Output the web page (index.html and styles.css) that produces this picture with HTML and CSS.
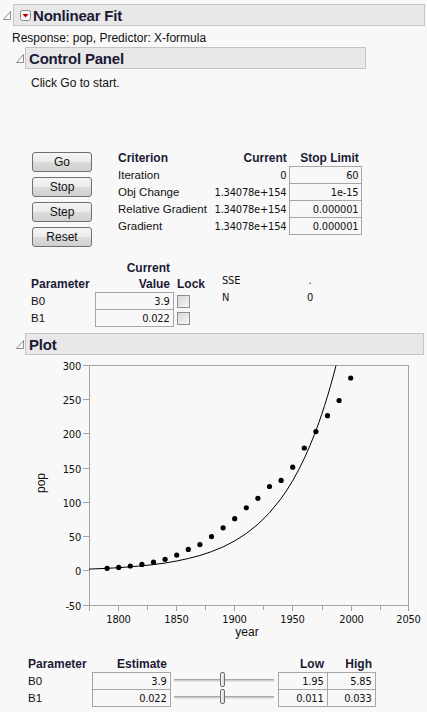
FILE: index.html
```html
<!DOCTYPE html>
<html>
<head>
<meta charset="utf-8">
<title>Nonlinear Fit</title>
<link rel="stylesheet" href="styles.css">
</head>
<body>
<div class="report">
  <div class="ohead lvl0">
    <svg class="disc" width="8" height="9" viewBox="0 0 8 9"><path d="M7.5 0.5 V8.5 H0.5 Z" fill="#fbfbfb" stroke="#8c8c8c"/></svg>
    <div class="obox">
      <svg class="menu" width="11" height="11" viewBox="0 0 11 11"><rect x="0.5" y="0.5" width="10" height="10" rx="2" fill="#f4f4f4" stroke="#8a8a8a"/><path d="M2.5 4 H8.5 L5.5 7.5 Z" fill="#b40000"/></svg>
      <span class="otitle">Nonlinear Fit</span>
    </div>
  </div>
  <div class="subtitle">Response: pop, Predictor: X-formula</div>

  <div class="ohead lvl1 cp">
    <svg class="disc" width="8" height="9" viewBox="0 0 8 9"><path d="M7.5 0.5 V8.5 H0.5 Z" fill="#fbfbfb" stroke="#8c8c8c"/></svg>
    <div class="obox"><span class="otitle">Control Panel</span></div>
  </div>
  <div class="cp-body">
    <div class="msg">Click Go to start.</div>
    <div class="cp-row">
      <div class="btns">
        <button class="btn">Go</button>
        <button class="btn">Stop</button>
        <button class="btn">Step</button>
        <button class="btn">Reset</button>
      </div>
      <table class="crit">
        <tr class="hrow"><th class="c1 l">Criterion</th><th class="c2 r">Current</th><th class="c3 r">Stop Limit</th></tr>
        <tr><td class="l">Iteration</td><td class="r num">0</td><td class="r num box">60</td></tr>
        <tr><td class="l">Obj Change</td><td class="r num">1.34078e+154</td><td class="r num box">1e-15</td></tr>
        <tr><td class="l">Relative Gradient</td><td class="r num">1.34078e+154</td><td class="r num box">0.000001</td></tr>
        <tr><td class="l">Gradient</td><td class="r num">1.34078e+154</td><td class="r num box">0.000001</td></tr>
      </table>
    </div>
    <div class="param-row">
      <table class="params">
        <tr class="hrow"><th class="p1"></th><th class="p2 r">Current</th><th class="p3"></th></tr>
        <tr class="hrow"><th class="l">Parameter</th><th class="r">Value</th><th class="l lock">Lock</th></tr>
        <tr><td class="l">B0</td><td class="r num box">3.9</td><td><span class="chk"></span></td></tr>
        <tr><td class="l">B1</td><td class="r num box">0.022</td><td><span class="chk"></span></td></tr>
      </table>
      <table class="sse">
        <tr><td class="s1 num">SSE</td><td class="s2 num">.</td></tr>
        <tr><td class="s1 num">N</td><td class="s2 num">0</td></tr>
      </table>
    </div>
  </div>

  <div class="ohead lvl1 pl">
    <svg class="disc" width="8" height="9" viewBox="0 0 8 9"><path d="M7.5 0.5 V8.5 H0.5 Z" fill="#fbfbfb" stroke="#8c8c8c"/></svg>
    <div class="obox"><span class="otitle">Plot</span></div>
  </div>

  <svg class="chart" width="427" height="300" viewBox="0 355 427 300">
    <g class="axis" stroke="#a3a3a3" stroke-width="1" fill="none">
      <rect x="89.5" y="365.5" width="319" height="240"/>
      <path d="M83 365.5H89 M83 399.5H89 M83 433.5H89 M83 468.5H89 M83 502.5H89 M83 536.5H89 M83 570.5H89 M83 605.5H89"/>
      <path d="M89.5 605V611 M118.5 605V611 M147.5 605V610 M176.5 605V611 M205.5 605V610 M234.5 605V611 M263.5 605V610 M292.5 605V611 M322.5 605V610 M351.5 605V611 M380.5 605V610 M408.5 605V611"/>
    </g>
    <g class="ylab" text-anchor="end">
      <text x="81" y="369.5">300</text>
      <text x="81" y="403.5">250</text>
      <text x="81" y="437.5">200</text>
      <text x="81" y="472.5">150</text>
      <text x="81" y="506.5">100</text>
      <text x="81" y="540.5">50</text>
      <text x="81" y="574.5">0</text>
      <text x="81" y="609.5">-50</text>
    </g>
    <g class="xlab" text-anchor="middle">
      <text x="118.5" y="622.5">1800</text>
      <text x="176.5" y="622.5">1850</text>
      <text x="234.5" y="622.5">1900</text>
      <text x="292.5" y="622.5">1950</text>
      <text x="351.5" y="622.5">2000</text>
      <text x="408.5" y="622.5">2050</text>
    </g>
    <text class="atitle" x="247" y="636" text-anchor="middle">year</text>
    <text class="atitle" x="45" y="483" text-anchor="middle" transform="rotate(-90 45 483)">pop</text>
    <polyline fill="none" stroke="#000" stroke-width="1" points="89,569.1 107.1,568.3 118.7,567.7 130.3,566.8 141.9,565.8 153.5,564.6 165.1,563.0 176.7,561.0 188.3,558.5 199.9,555.5 211.5,551.6 223.1,546.9 234.7,540.9 246.3,533.5 257.9,524.3 269.5,512.8 281.1,498.5 286.9,490.1 292.7,480.7 298.5,470.1 304.3,458.4 310.1,445.3 315.9,430.7 318.8,422.8 321.7,414.4 324.6,405.5 327.5,396.2 330.4,386.3 333.3,375.9 336.0,365.5"/>
    <g fill="#000">
      <circle cx="107.1" cy="568.3" r="2.6"/>
      <circle cx="118.7" cy="567.4" r="2.6"/>
      <circle cx="130.3" cy="566.0" r="2.6"/>
      <circle cx="141.9" cy="564.4" r="2.6"/>
      <circle cx="153.5" cy="562.2" r="2.6"/>
      <circle cx="165.1" cy="559.3" r="2.6"/>
      <circle cx="176.7" cy="555.1" r="2.6"/>
      <circle cx="188.3" cy="549.4" r="2.6"/>
      <circle cx="199.9" cy="544.6" r="2.6"/>
      <circle cx="211.5" cy="536.6" r="2.6"/>
      <circle cx="223.1" cy="527.8" r="2.6"/>
      <circle cx="234.7" cy="518.7" r="2.6"/>
      <circle cx="246.3" cy="507.8" r="2.6"/>
      <circle cx="257.9" cy="498.3" r="2.6"/>
      <circle cx="269.5" cy="486.5" r="2.6"/>
      <circle cx="281.1" cy="480.4" r="2.6"/>
      <circle cx="292.7" cy="467.2" r="2.6"/>
      <circle cx="304.3" cy="448.0" r="2.6"/>
      <circle cx="315.9" cy="431.6" r="2.6"/>
      <circle cx="327.5" cy="415.7" r="2.6"/>
      <circle cx="339.1" cy="400.5" r="2.6"/>
      <circle cx="350.7" cy="378.0" r="2.6"/>
    </g>
  </svg>

  <table class="est">
    <tr class="hrow"><th class="e1 l">Parameter</th><th class="e2 r">Estimate</th><th class="e3"></th><th class="e4 r">Low</th><th class="e5 r">High</th></tr>
    <tr><td class="l">B0</td><td class="r num box">3.9</td><td><div class="slider"><div class="track"></div><div class="thumb"></div></div></td><td class="r num box">1.95</td><td class="r num box">5.85</td></tr>
    <tr><td class="l">B1</td><td class="r num box">0.022</td><td><div class="slider"><div class="track"></div><div class="thumb"></div></div></td><td class="r num box">0.011</td><td class="r num box">0.033</td></tr>
  </table>
</div>
</body>
</html>
```
FILE: styles.css
```css
html, body {
  margin: 0;
  padding: 0;
  background: #f8f8f8;
}
body {
  width: 427px;
  height: 712px;
  overflow: hidden;
  font-family: "Liberation Sans", Arial, sans-serif;
  font-size: 12px;
  color: #111;
}
.report {
  padding-top: 4px;
}
.ohead {
  display: flex;
  align-items: center;
  height: 22px;
}
.disc {
  display: block;
  flex: none;
}
.lvl0 {
  padding-left: 3px;
}
.lvl0 .disc {
  margin-right: 2px;
}
.lvl1 {
  padding-left: 16px;
  margin-top: 1px;
}
.lvl1 .disc {
  margin-right: 1px;
}
.lvl1.pl {
  margin-top: 6px;
}
.obox {
  box-sizing: border-box;
  height: 22px;
  border: 1px solid #c4c4c4;
  background: #e8e8e8;
  display: flex;
  align-items: center;
  padding-left: 3px;
}
.lvl0 .obox {
  width: 412px;
  padding-left: 6px;
}
.cp .obox {
  width: 341px;
}
.pl .obox {
  width: 399px;
}
.menu {
  display: block;
  margin-right: 2px;
  flex: none;
}
.otitle {
  font-weight: bold;
  font-size: 15px;
  letter-spacing: -0.2px;
  color: #1a1a36;
}
.subtitle {
  padding-left: 12px;
  margin-top: 4px;
  line-height: 16px;
  font-size: 12px;
}
.cp-body {
  padding-left: 31px;
}
.msg {
  margin-top: 6px;
  line-height: 16px;
}
.cp-row {
  display: flex;
  align-items: flex-start;
  margin-top: 59px;
  padding-left: 1px;
}
.btns {
  display: flex;
  flex-direction: column;
  gap: 5px;
  margin-top: 2px;
  width: 60px;
}
.btn {
  box-sizing: border-box;
  width: 60px;
  height: 20px;
  padding: 0;
  border: 1px solid #707070;
  border-radius: 3px;
  background: linear-gradient(#f4f4f4, #ebebeb 50%, #dcdcdc 51%, #d0d0d0);
  font-family: "Liberation Sans", Arial, sans-serif;
  font-size: 12px;
  color: #111;
}
table {
  border-collapse: collapse;
  border-spacing: 0;
}
th, td {
  padding: 0;
  height: 16px;
  line-height: 15px;
  white-space: nowrap;
  font-size: 11.5px;
  vertical-align: middle;
}
th {
  font-weight: bold;
  font-size: 12px;
  color: #1a1a36;
}
.l { text-align: left; }
.r { text-align: right; padding-right: 3px; }
.num {
  font-family: "DejaVu Sans Condensed", "Liberation Serif", serif;
  font-stretch: condensed;
  font-size: 11px;
  letter-spacing: -0.2px;
}
.box {
  border: 1px solid #a6a6a6;
}
.crit {
  margin-left: 26px;
}
.crit .c1 { width: 87px; }
.crit .c2 { width: 80px; }
.crit .c3 { width: 69px; }
.crit td { height: 16px; }
.param-row {
  display: flex;
  align-items: flex-start;
  margin-top: 13px;
}
.params .p1 { width: 64px; }
.params .p2 { width: 75px; }
.params .p3 { width: 32px; }
.params .lock { padding-left: 4px; }
.chk {
  display: block;
  box-sizing: border-box;
  width: 13px;
  height: 13px;
  margin-left: 3px;
  border: 1px solid #8e8e8e;
  background: linear-gradient(135deg, #d8d8d8, #f6f6f6);
}
.sse {
  margin-left: 17px;
  margin-top: 12px;
}
.sse td { height: 17px; }
.sse .s1 { width: 81px; text-align: left; }
.sse .s2 { width: 14px; text-align: center; }
.chart {
  display: block;
  font-family: "Liberation Sans", Arial, sans-serif;
}
.ylab text, .xlab text {
  font-family: "DejaVu Sans Condensed", "Liberation Serif", serif;
  font-stretch: condensed;
  font-size: 11px;
  letter-spacing: -0.2px;
  fill: #111;
}
.atitle {
  font-size: 12px;
  fill: #111;
}
.est {
  margin-left: 28px;
  margin-top: 1px;
}
.est .e1 { width: 64px; }
.est .e2 { width: 75px; }
.est .e3 { width: 108px; }
.est .e4 { width: 46px; }
.est .e5 { width: 45px; }
.slider {
  position: relative;
  height: 16px;
}
.track {
  position: absolute;
  left: 3px;
  top: 6px;
  width: 100px;
  height: 1px;
  border-top: 1px solid #a8a8a8;
  border-bottom: 1px solid #e2e2e2;
  background: #cfcfcf;
}
.thumb {
  position: absolute;
  left: 49px;
  top: -1px;
  box-sizing: border-box;
  width: 5px;
  height: 15px;
  border: 1px solid #6f6f6f;
  border-radius: 2px;
  background: linear-gradient(90deg, #f8f8f8, #d8d8d8);
}
```
